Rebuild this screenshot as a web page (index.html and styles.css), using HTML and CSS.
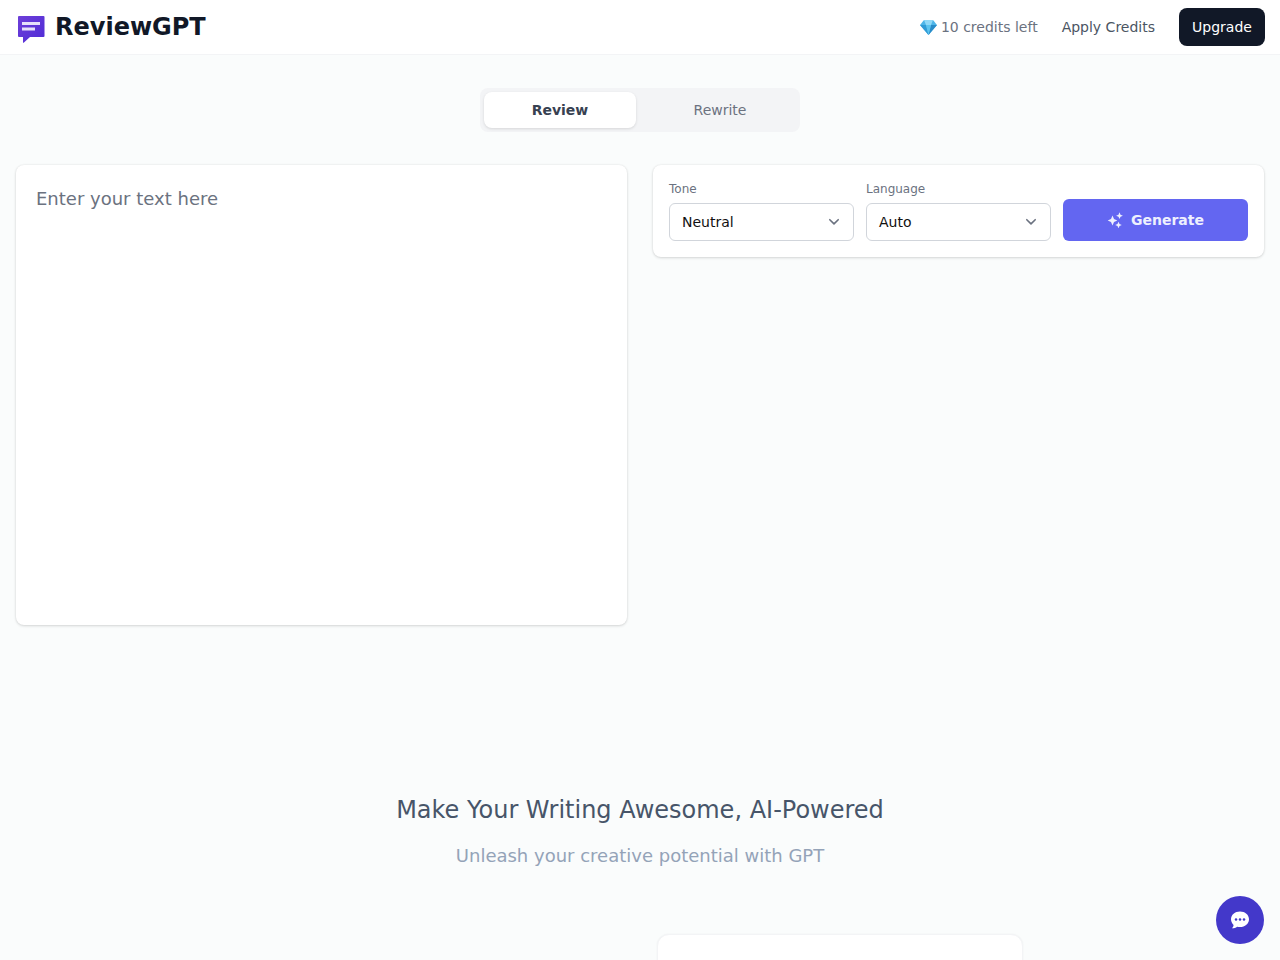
FILE: index.html
```html
<!DOCTYPE html>
<html lang="en">
<head>
    <meta charset="UTF-8">
    <title>ReviewGPT</title>
    <link rel="stylesheet" href="styles.css">
</head>
<body>
<div class="head">
    <div class="logo">
        <svg class="logo-icon" width="30" height="30" viewBox="0 0 30 30">
            <defs>
                <linearGradient id="logoFill" x1="0" y1="0" x2="1" y2="1">
                    <stop offset="0" stop-color="#6d3fd8"/>
                    <stop offset="1" stop-color="#4f2bd6"/>
                </linearGradient>
            </defs>
            <path d="M2 3h24.500a1 1 0 0 1 1 1v19a1 1 0 0 1-1 1H13l-6.300 5.700a.4.4 0 0 1-.7-.3V24H2a1 1 0 0 1-1-1V4a1 1 0 0 1 1-1z" fill="url(#logoFill)"/>
            <rect x="5" y="9" width="18" height="3" fill="#e6e0fa"/>
            <rect x="5" y="14.500" width="13" height="3" fill="#e6e0fa"/>
        </svg>
        <span class="logo-text">ReviewGPT</span>
    </div>
    <div class="head-right">
        <span class="credits">
            <svg class="gem" width="17" height="16" viewBox="0 0 17 16">
                <path d="M4 1h9l4 5-8.500 10L0 6z" fill="#4db5e8"/>
                <path d="M4 1h9l-2 5H6z" fill="#8fd8f7"/>
                <path d="M0 6h6l2.500 10z" fill="#2f9bd6"/>
                <path d="M17 6h-6L8.500 16z" fill="#2a8cc8"/>
                <path d="M6 6h5L8.500 16z" fill="#5cc4ef"/>
            </svg>
            10 credits left
        </span>
        <a class="apply">Apply Credits</a>
        <button class="upgrade">Upgrade</button>
    </div>
</div>

<div class="tabs">
    <div class="tab tab-on">Review</div>
    <div class="tab tab-off">Rewrite</div>
</div>

<div class="main">
    <div class="card editor">
        <textarea class="texts" placeholder="Enter your text here"></textarea>
    </div>
    <div class="card options">
        <div class="field">
            <label class="field-label">Tone</label>
            <div class="select">
                <span>Neutral</span>
                <svg width="12" height="8" viewBox="0 0 12 8"><path d="M1.800 1.700 6 5.900l4.200-4.200" fill="none" stroke="#6b7280" stroke-width="1.600" stroke-linecap="round" stroke-linejoin="round"/></svg>
            </div>
        </div>
        <div class="field">
            <label class="field-label">Language</label>
            <div class="select">
                <span>Auto</span>
                <svg width="12" height="8" viewBox="0 0 12 8"><path d="M1.800 1.700 6 5.900l4.200-4.200" fill="none" stroke="#6b7280" stroke-width="1.600" stroke-linecap="round" stroke-linejoin="round"/></svg>
            </div>
        </div>
        <button class="generate">
            <svg width="16" height="16" viewBox="0 0 16 16" fill="#eef0fe">
                <path d="M5.500 3.500 7 7l3.300 1.500L7 10l-1.500 3.500L4 10 .7 8.500 4 7z"/>
                <path d="M12.500 .3l1 2.400 2.400 1-2.400 1-1 2.400-1-2.400-2.400-1 2.400-1z"/>
                <path d="M11.500 9.700l1 2.300 2.300 1-2.300 1-1 2.300-1-2.300-2.300-1 2.300-1z"/>
            </svg>
            Generate
        </button>
    </div>
</div>

<div class="intro">
    <h2 class="intro-title">Make Your Writing Awesome, AI-Powered</h2>
    <p class="intro-sub">Unleash your creative potential with GPT</p>
</div>

<div class="bottom">
    <div class="bottom-card"></div>
</div>

<button class="chat">
    <svg width="20" height="20" viewBox="0 0 20 20">
        <path d="M10 1.500c5 0 9 3.300 9 7.800s-4 7.800-9 7.800c-1 0-2-.1-2.900-.4-1.300 1-3 1.500-5.100 1.500 1-1 1.500-2.100 1.600-3.300-1.600-1.400-2.600-3.400-2.600-5.600 0-4.500 4-7.800 9-7.800z" fill="#fff"/>
        <circle cx="6" cy="9.500" r="1.250" fill="#4338ca"/>
        <circle cx="10" cy="9.500" r="1.250" fill="#4338ca"/>
        <circle cx="14" cy="9.500" r="1.250" fill="#4338ca"/>
    </svg>
</button>
</body>
</html>
```

FILE: styles.css
```css
* {
    margin: 0;
    padding: 0;
    box-sizing: border-box;
}
html, body {
    width: 100%;
    height: 100%;
    overflow: hidden;
    background-color: #fafcfc;
    font-family: "DejaVu Sans", sans-serif;
}
.head {
    height: 55px;
    background-color: #fff;
    border-bottom: 1px solid #f3f4f6;
    display: flex;
    justify-content: space-between;
    align-items: center;
    padding: 0 15px 1px 17px;
}
.logo {
    display: flex;
    align-items: center;
    gap: 8px;
}
.logo-icon {
    margin-top: 2px;
}
.logo-text {
    font-size: 24px;
    font-weight: bold;
    color: #111827;
}
.head-right {
    display: flex;
    align-items: center;
    font-size: 14px;
}
.credits {
    display: flex;
    align-items: center;
    gap: 3px;
    color: #6b7280;
}
.gem {
    margin-right: 1px;
}
.apply {
    color: #4b5563;
    margin-left: 24px;
}
.upgrade {
    width: 86px;
    height: 38px;
    margin-left: 24px;
    border: 0;
    border-radius: 8px;
    background-color: #111827;
    color: #fff;
    font-family: inherit;
    font-size: 14px;
}
.tabs {
    width: 320px;
    height: 44px;
    margin: 33px auto 0;
    padding: 4px;
    border-radius: 8px;
    background-color: #f3f4f6;
    display: flex;
}
.tab {
    width: 152px;
    height: 36px;
    line-height: 36px;
    text-align: center;
    font-size: 14px;
    color: #6b7280;
}
.tab-off {
    margin-left: 8px;
}
.tab-on {
    background-color: #fff;
    border-radius: 8px;
    box-shadow: 0 1px 3px rgba(0,0,0,0.12);
    font-weight: bold;
    color: #374151;
}
.main {
    display: grid;
    grid-template-columns: 611px 611px;
    justify-content: space-between;
    align-items: start;
    padding: 0 16px;
    margin-top: 33px;
}
.card {
    background-color: #fff;
    border-radius: 8px;
    box-shadow: 0 0 2px rgba(0,0,0,0.08), 0 1px 3px rgba(0,0,0,0.14);
}
.editor {
    height: 460px;
    padding: 20px;
}
.texts {
    display: block;
    width: 100%;
    height: 100%;
    border: 0;
    outline: 0;
    resize: none;
    background: transparent;
    font-family: inherit;
    font-size: 18px;
    line-height: 28px;
}
.texts::placeholder {
    color: #6b7280;
    opacity: 1;
}
.options {
    height: 92px;
    padding: 16px;
    display: grid;
    grid-template-columns: 185px 185px 185px;
    gap: 12px;
    align-items: end;
}
.field-label {
    display: block;
    font-size: 12px;
    line-height: 16px;
    color: #6b7280;
    margin-bottom: 6px;
}
.select {
    height: 38px;
    padding: 0 13px 0 12px;
    border: 1px solid #d1d5db;
    border-radius: 6px;
    display: flex;
    justify-content: space-between;
    align-items: center;
    font-size: 14px;
    color: #111;
    background-color: #fff;
}
.generate {
    height: 42px;
    border: 0;
    border-radius: 6px;
    background-color: #6366f1;
    color: #eef0fe;
    font-family: inherit;
    font-size: 14px;
    font-weight: bold;
    display: flex;
    justify-content: center;
    align-items: center;
    gap: 8px;
}
.intro {
    margin-top: 169px;
    text-align: center;
}
.intro-title {
    font-size: 24px;
    line-height: 32px;
    font-weight: normal;
    color: #475569;
}
.intro-sub {
    margin-top: 16px;
    font-size: 18px;
    line-height: 28px;
    color: #94a3b8;
}
.bottom {
    margin-top: 64px;
    padding-left: 657px;
}
.bottom-card {
    width: 366px;
    height: 200px;
    background-color: #fff;
    border: 1px solid #f3f4f6;
    border-radius: 12px;
    box-shadow: 0 0 2px rgba(0,0,0,0.06);
}
.chat {
    position: fixed;
    right: 16px;
    bottom: 16px;
    width: 48px;
    height: 48px;
    border: 0;
    border-radius: 50%;
    background-color: #4338ca;
    display: flex;
    justify-content: center;
    align-items: center;
}
```
